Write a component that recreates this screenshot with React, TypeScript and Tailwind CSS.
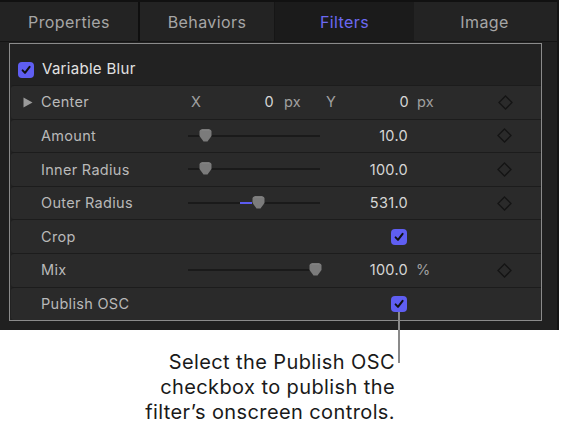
import React from 'react';

const font = { fontFamily: 'Inter, "Liberation Sans", sans-serif' };

function Check({ className = '' }: { className?: string }) {
  return (
    <span className={`w-[16px] h-[16px] rounded-[4px] bg-[#5f5ef2] flex items-center justify-center flex-shrink-0 ${className}`}>
      <svg width="12" height="12" viewBox="0 0 12 12">
        <path d="M2.6 6.4 L5 8.9 L9.6 2.8" fill="none" stroke="#111" strokeWidth="2" strokeLinecap="round" strokeLinejoin="round" />
      </svg>
    </span>
  );
}

function Diamond() {
  return (
    <svg width="15" height="15" viewBox="0 0 15 15" className="flex-shrink-0">
      <path d="M7.5 1 L14 7.5 L7.5 14 L1 7.5 Z" fill="none" stroke="#141414" strokeWidth="1.3" />
    </svg>
  );
}

function Slider({ pos, fill }: { pos: number; fill?: [number, number] }) {
  return (
    <div className="relative w-[132px] h-full flex items-center">
      <div className="w-full h-[2px] bg-[#1a1a1a]" />
      {fill && (
        <div
          className="absolute h-[2px] bg-[#5b5bf0]"
          style={{ left: fill[0], width: fill[1] - fill[0] }}
        />
      )}
      <svg
        width="13"
        height="13"
        viewBox="0 0 13 13"
        className="absolute top-1/2 -translate-y-[7px]"
        style={{ left: pos - 6.5 }}
      >
        <path d="M2.5 0.5 H10.5 Q12.5 0.5 12.5 2.5 V7 L8.5 12.5 H4.5 L0.5 7 V2.5 Q0.5 0.5 2.5 0.5 Z" fill="#7b7b7b" />
        <path d="M2.5 0.8 H10.5" stroke="#9a9a9a" strokeWidth="0.8" />
      </svg>
    </div>
  );
}

function Row({ children }: { children: React.ReactNode }) {
  return (
    <div className="h-[33.6px] flex items-center bg-[#2a2a2a] border-t border-[#1c1c1c] rounded-l-[3px] ml-[1px] tracking-[0.3px]">
      {children}
    </div>
  );
}

function Label({ text, arrow }: { text: string; arrow?: boolean }) {
  return (
    <div className="w-[177px] flex items-center text-[14.5px] text-[#b9b9b9] flex-shrink-0">
      <span className="w-[30px] flex justify-end pr-[8px]">
        {arrow && (
          <svg width="10" height="11" viewBox="0 0 10 11">
            <path d="M0.5 0.5 L9.5 5.5 L0.5 10.5 Z" fill="#9a9a9a" />
          </svg>
        )}
      </span>
      {text}
    </div>
  );
}

const tabs = [
  { name: 'Properties', w: 'w-[140px]' },
  { name: 'Behaviors', w: 'w-[135px]' },
  { name: 'Filters', w: 'w-[139px]', active: true },
  { name: 'Image', w: 'w-[141px]' },
];

export default function App() {
  return (
    <div className="relative w-[562px] h-[432px] bg-white overflow-hidden" style={font}>
      {/* Inspector panel */}
      <div className="w-[559px] h-[330px] bg-[#202020] border-r-2 border-[#141414] flex flex-col">
        {/* Tabs */}
        <div className="h-[42px] flex border-t-2 border-[#111] border-b border-b-[#141414] bg-[#232323]">
          {tabs.map((t, i) => (
            <div
              key={t.name}
              className={`${t.w} flex items-center justify-center text-[16px] tracking-[0.4px] ${
                t.active ? 'bg-[#1b1b1b] text-[#6c69f2]' : 'text-[#a6a6a6]'
              } ${i === 0 ? 'border-r-2 border-[#0f0f0f]' : ''} ${i === 1 ? 'border-r border-[#161616]' : ''}`}
            >
              {t.name}
            </div>
          ))}
        </div>

        {/* Filter box */}
        <div className="ml-[9px] mt-[1px] w-[533px] border border-[#8b8b8b] bg-[#222]">
          <div className="h-[41px] flex items-center pt-[10px] pl-[8px] gap-[8px] text-[15px] tracking-[0.3px] text-[#e2e2e2]">
            <Check />
            Variable Blur
          </div>

          <Row>
            <Label text="Center" arrow />
            <span className="w-[22px] pl-[3px] text-[14.5px] text-[#a0a0a0]">X</span>
            <span className="w-[64px] text-right text-[14.5px] text-[#d6d6d6]">0</span>
            <span className="w-[52px] pl-[10px] text-[14.5px] text-[#a0a0a0]">px</span>
            <span className="w-[18px] text-[14.5px] text-[#a0a0a0]">Y</span>
            <span className="w-[65px] text-right text-[14.5px] text-[#d6d6d6]">0</span>
            <span className="w-[89px] pl-[8px] text-[14.5px] text-[#a0a0a0]">px</span>
            <Diamond />
          </Row>

          {[
            { label: 'Amount', pos: 17, value: '10.0' },
            { label: 'Inner Radius', pos: 17, value: '100.0' },
            { label: 'Outer Radius', pos: 70, value: '531.0', fill: [52, 64] as [number, number] },
          ].map((r) => (
            <Row key={r.label}>
              <Label text={r.label} />
              <Slider pos={r.pos} fill={r.fill} />
              <span className="w-[88px] text-right text-[14.5px] text-[#d6d6d6]">{r.value}</span>
              <span className="w-[89px]" />
              <Diamond />
            </Row>
          ))}

          <Row>
            <Label text="Crop" />
            <span className="w-[203px]" />
            <Check />
          </Row>

          <Row>
            <Label text="Mix" />
            <Slider pos={127} />
            <span className="w-[88px] text-right text-[14.5px] text-[#d6d6d6]">100.0</span>
            <span className="w-[89px] pl-[8px] text-[14.5px] text-[#a0a0a0]">%</span>
            <Diamond />
          </Row>

          <Row>
            <Label text="Publish OSC" />
            <span className="w-[203px]" />
            <Check />
          </Row>
        </div>
      </div>

      {/* Callout */}
      <div className="flex justify-end pr-[167px] pt-[20px]">
        <p className="text-right text-[20px] leading-[25px] tracking-[0.4px] text-[#1a1a1a]">
          Select the Publish OSC
          <br />
          checkbox to publish the
          <br />
          filter’s onscreen controls.
        </p>
      </div>
      <div className="absolute left-[398px] top-[312px] w-[1.5px] h-[51px] bg-[#8a8a8a]" />
    </div>
  );
}
